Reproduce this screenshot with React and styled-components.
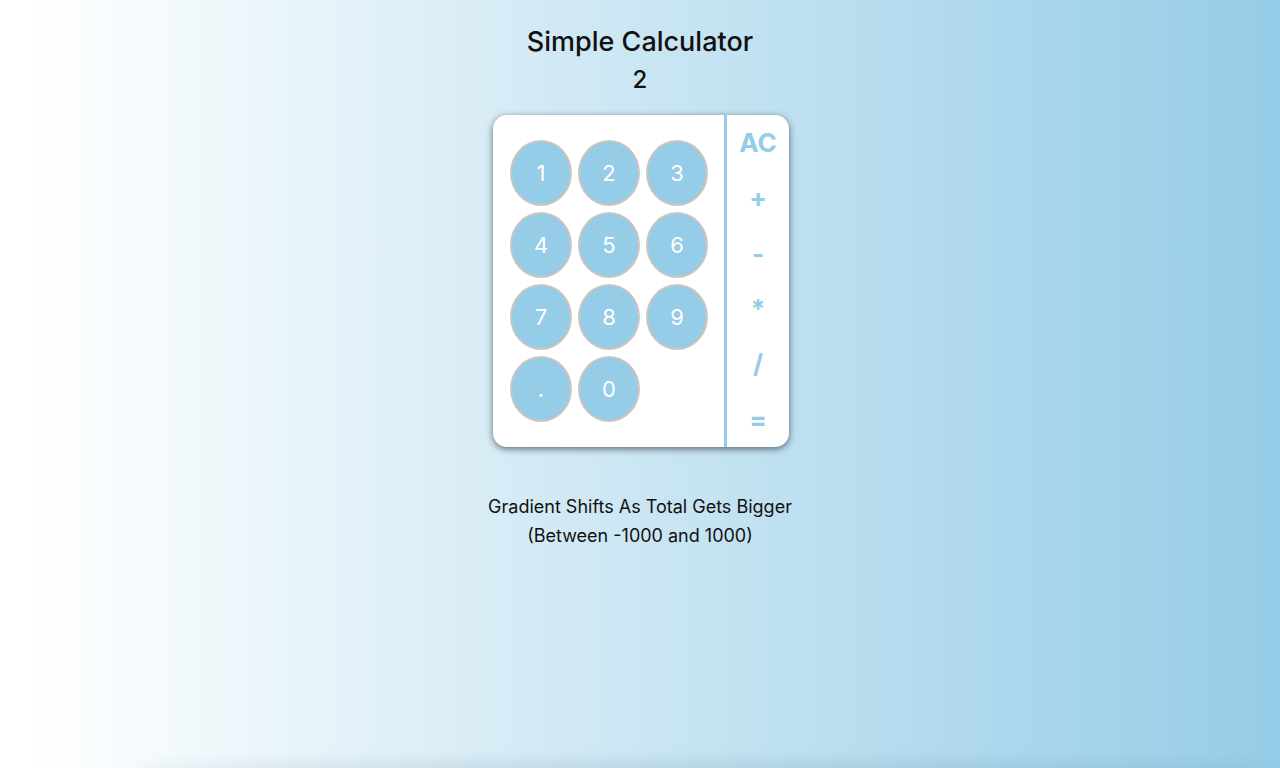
import React from "react";
import styled, { createGlobalStyle } from "styled-components";

const Global = createGlobalStyle`
  html, body { margin: 0; padding: 0; }
  body {
    font-family: Inter, "Liberation Sans", Arial, sans-serif;
    color: #111;
  }
`;

const Page = styled.div`
  position: relative;
  min-height: 100vh;
  overflow: hidden;
  background: linear-gradient(to right, #ffffff 2%, #95cce7 100%);
  display: flex;
  flex-direction: column;
  align-items: center;
  padding-top: 25px;
  box-sizing: border-box;
  &::after {
    content: "";
    position: absolute;
    left: 130px;
    right: 0;
    bottom: -20px;
    height: 20px;
    box-shadow: 0 -5px 16px rgba(60, 90, 110, 0.14);
    border-radius: 50%;
  }
`;

const Title = styled.h1`
  margin: 0;
  font-size: 27px;
  font-weight: 500;
  line-height: 34px;
  color: #111;
`;

const Total = styled.div`
  font-size: 24px;
  font-weight: 500;
  line-height: 30px;
  margin-top: 6px;
`;

const Card = styled.div`
  margin-top: 20px;
  margin-left: 2px;
  width: 296px;
  height: 332px;
  background: #fff;
  border-radius: 14px;
  box-shadow: 0 2px 7px rgba(0, 0, 0, 0.55);
  display: flex;
  overflow: hidden;
`;

const Pad = styled.div`
  width: 231px;
  box-sizing: border-box;
  padding: 25px 0 0 17px;
  display: grid;
  grid-template-columns: repeat(3, 62px);
  grid-auto-rows: 66px;
  column-gap: 6px;
  row-gap: 6px;
  align-content: start;
`;

const Key = styled.button`
  width: 62px;
  height: 66px;
  border-radius: 50%;
  border: 2px solid #cbc5bf;
  background: #95cce7;
  color: #fff;
  font-family: Inter, "Liberation Sans", Arial, sans-serif;
  font-size: 22px;
  font-weight: 400;
  padding: 0;
  display: flex;
  align-items: center;
  justify-content: center;
`;

const Divider = styled.div`
  width: 3px;
  background: #95cce7;
`;

const Ops = styled.div`
  flex: 1;
  display: grid;
  grid-template-rows: repeat(6, 1fr);
`;

const Op = styled.button`
  border: none;
  background: transparent;
  color: #95cce7;
  font-family: Inter, "Liberation Sans", Arial, sans-serif;
  font-weight: 700;
  font-size: 26px;
  padding: 0;
  display: flex;
  align-items: center;
  justify-content: center;
`;

const Note = styled.p`
  margin: 45px 0 0;
  text-align: center;
  font-size: 18px;
  line-height: 29px;
  color: #111;
`;

const keys = ["1", "2", "3", "4", "5", "6", "7", "8", "9", ".", "0"];
const ops = ["AC", "+", "-", "*", "/", "="];

export default function App() {
  return (
    <>
      <Global />
      <Page>
        <Title>Simple Calculator</Title>
        <Total>2</Total>
        <Card>
          <Pad>
            {keys.map((k) => (
              <Key key={k}>{k}</Key>
            ))}
          </Pad>
          <Divider />
          <Ops>
            {ops.map((o) => (
              <Op key={o}>{o}</Op>
            ))}
          </Ops>
        </Card>
        <Note>
          Gradient Shifts As Total Gets Bigger
          <br />
          (Between -1000 and 1000)
        </Note>
      </Page>
    </>
  );
}
